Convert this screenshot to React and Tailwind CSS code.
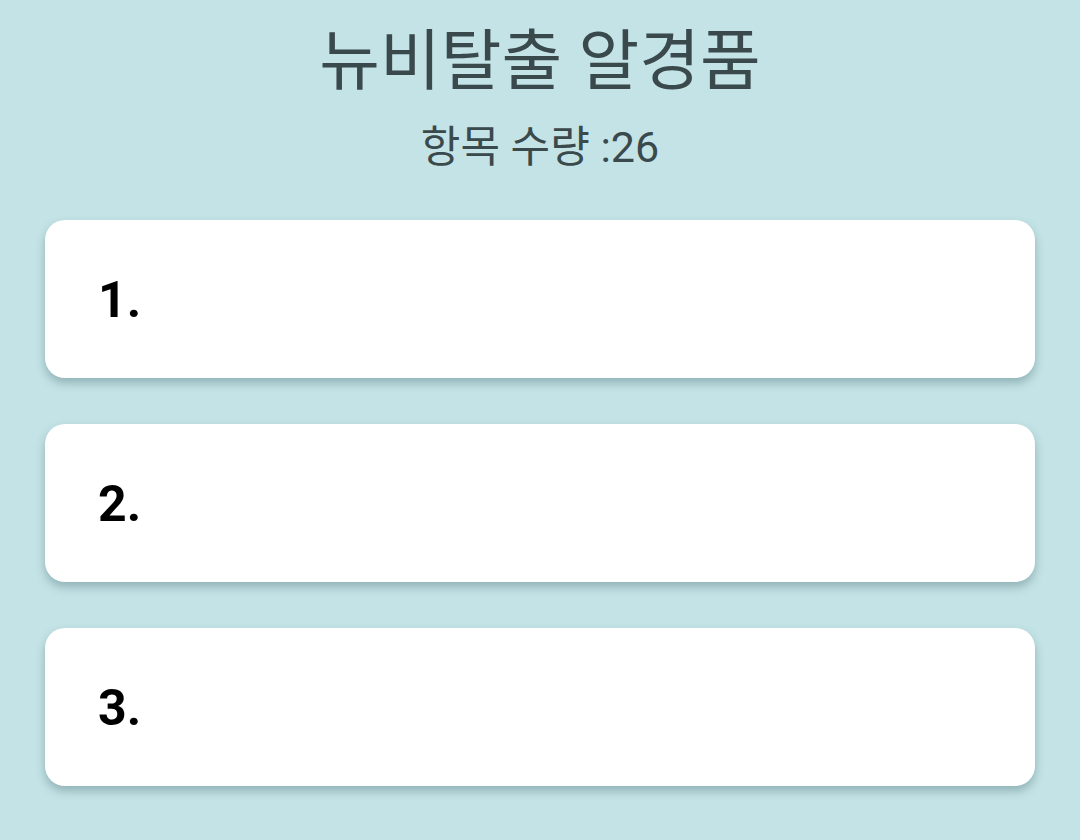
import React from 'react';

const items = ['1.', '2.', '3.'];

export default function App() {
  return (
    <div
      className="min-h-[840px] w-full bg-[#c4e3e6] px-[45px] pt-[22px]"
      style={{ fontFamily: 'Roboto, "Noto Sans CJK KR", sans-serif' }}
    >
      <h1 className="text-center text-[66px] leading-[80px] text-[#3a494c]">뉴비탈출 알경품</h1>
      <p className="mt-[20px] text-center text-[43px] leading-[50px] text-[#3a494c]">항목 수량 :26</p>

      <div className="mt-[48px] flex flex-col gap-[46px]">
        {items.map((label) => (
          <div
            key={label}
            className="flex h-[158px] items-center rounded-[20px] bg-white pl-[53px] pt-[3px] shadow-[0_5px_10px_rgba(60,100,105,0.38)]"
          >
            <span className="text-[50px] font-bold text-black">{label}</span>
          </div>
        ))}
      </div>
    </div>
  );
}
